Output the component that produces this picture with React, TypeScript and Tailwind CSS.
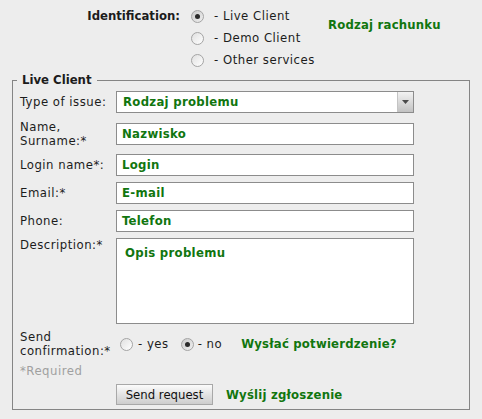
const font = "font-['DejaVu_Sans_Condensed','DejaVu_Sans',sans-serif] font-stretch-condensed";

function Radio({ checked }: { checked?: boolean }) {
  return (
    <span
      className={
        'flex h-[13px] w-[13px] shrink-0 items-center justify-center rounded-full border border-[#a4a4a4] ' +
        (checked ? 'bg-gradient-to-br from-[#cbcbcb] to-[#f0f0f0]' : 'bg-gradient-to-br from-[#e0e0e0] to-[#ffffff]')
      }
    >
      {checked && <span className="h-[5px] w-[5px] rounded-full bg-[#2a2a2a]" />}
    </span>
  );
}

function Field({ value }: { value: string }) {
  return (
    <div className="flex h-[22px] w-[298px] items-center border border-[#8c8c8c] bg-white pl-[5px] text-[13px] font-bold tracking-[0.3px] text-[#11760f]">
      {value}
    </div>
  );
}

export default function App() {
  return (
    <div className={`h-[419px] w-[482px] bg-[#ededed] text-[13px] tracking-[0.5px] text-[#1c1c1c] ${font}`}>
      {/* account type */}
      <div className="flex pt-[5px]">
        <div className="w-[180px] text-right font-bold leading-[22px] tracking-normal">Identification:</div>
        <div className="ml-[11px] flex w-[137px] flex-col">
          {['Live Client', 'Demo Client', 'Other services'].map((t, i) => (
            <div key={t} className="flex h-[22px] items-center gap-[10px]">
              <Radio checked={i === 0} />
              <span>- {t}</span>
            </div>
          ))}
        </div>
        <div className="pt-[12px] text-[13px] font-bold leading-[16px] tracking-[0.2px] text-[#11760f]">Rodzaj rachunku</div>
      </div>

      <fieldset className="ml-[12px] mt-[1px] w-[458px] border border-[#858585] pl-[4px] pb-[4px]">
        <legend className="px-[5px] font-bold leading-[16px] tracking-normal">Live Client</legend>
        <div className="pl-[3px] pt-[3px]">
          <div className="flex h-[22px] items-center">
            <div className="w-[96px]">Type of issue:</div>
            <div className="flex h-[22px] w-[298px] items-center border border-[#8c8c8c] bg-white">
              <span className="flex-1 pl-[6px] font-bold tracking-[0.3px] text-[#11760f]">Rodzaj problemu</span>
              <span className="flex h-full w-[16px] items-center justify-center border-l border-[#c4c4c4] bg-gradient-to-b from-[#f3f3f3] to-[#c2c2c2]">
                <svg width="7" height="4" viewBox="0 0 7 4">
                  <path d="M0 0h7L3.5 4z" fill="#4a4a4a" />
                </svg>
              </span>
            </div>
          </div>

          <div className="mt-[7px] flex items-center">
            <div className="w-[96px] leading-[14px]">
              Name,
              <br />
              Surname:*
            </div>
            <Field value="Nazwisko" />
          </div>

          <div className="mt-[6px] flex items-center">
            <div className="w-[96px]">Login name*:</div>
            <Field value="Login" />
          </div>

          <div className="mt-[6px] flex items-center">
            <div className="w-[96px]">Email:*</div>
            <Field value="E-mail" />
          </div>

          <div className="mt-[6px] flex items-center">
            <div className="w-[96px]">Phone:</div>
            <Field value="Telefon" />
          </div>

          <div className="mt-[6px] flex items-start">
            <div className="w-[96px] leading-[14px]">Description:*</div>
            <div className="h-[86px] w-[298px] border border-[#8c8c8c] bg-white pl-[8px] pt-[4px] font-bold tracking-[0.3px] text-[#11760f]">
              Opis problemu
            </div>
          </div>

          <div className="mt-[6px] flex items-center">
            <div className="w-[96px] leading-[14px]">
              Send
              <br />
              confirmation:*
            </div>
            <div className="ml-[4px] flex items-center gap-[5px]">
              <Radio />
              <span>- yes</span>
            </div>
            <div className="ml-[12px] flex items-center gap-[4px]">
              <Radio checked />
              <span>- no</span>
            </div>
            <div className="ml-[19px] text-[13px] font-bold tracking-[0.2px] text-[#11760f]">Wysłać potwierdzenie?</div>
          </div>

          <div className="mt-[6px] leading-[14px] text-[#a0a0a0]">*Required</div>

          <div className="mt-[6px] flex items-center">
            <div className="w-[96px]" />
            <button className="h-[21px] w-[97px] border border-[#a8a8a8] bg-gradient-to-b from-[#fbfbfb] to-[#cdcdcd] text-[13px] tracking-normal text-[#111]">
              Send request
            </button>
            <div className="ml-[13px] text-[13px] font-bold tracking-[0.2px] text-[#11760f]">Wyślij zgłoszenie</div>
          </div>
        </div>
      </fieldset>
    </div>
  );
}
